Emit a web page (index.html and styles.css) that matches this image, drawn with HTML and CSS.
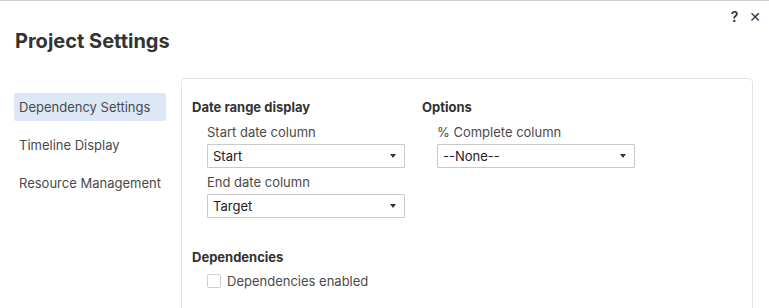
FILE: index.html
```html
<!DOCTYPE html>
<html lang="en">
<head>
  <meta charset="utf-8" />
  <title>Project Settings</title>
  <link rel="stylesheet" href="styles.css">
</head>
<body>
  <div class="dialog">
    <!-- Header -->
    <header class="dlg-head">
      <div class="tools">
        <span class="tool">?</span>
        <span class="tool close">&#x2715;</span>
      </div>
      <h1 class="title">Project Settings</h1>
    </header>

    <div class="dlg-body">
      <nav class="side">
        <a class="side-item active">Dependency Settings</a>
        <a class="side-item">Timeline Display</a>
        <a class="side-item">Resource Management</a>
      </nav>

      <section class="panel">
        <div class="cols">
          <div class="col">
            <h2>Date range display</h2>
            <div class="field">
              <label>Start date column</label>
              <div class="select"><span>Start</span><i class="caret"></i></div>
            </div>
            <div class="field">
              <label>End date column</label>
              <div class="select"><span>Target</span><i class="caret"></i></div>
            </div>
          </div>
          <div class="col">
            <h2>Options</h2>
            <div class="field">
              <label>% Complete column</label>
              <div class="select"><span>--None--</span><i class="caret"></i></div>
            </div>
          </div>
        </div>

        <h2 class="deps">Dependencies</h2>
        <label class="check"><span class="box"></span>Dependencies enabled</label>
      </section>
    </div>
  </div>
</body>
</html>
```

FILE: styles.css
```css
:root{
  --text:#333;
  --muted:#4a4a4a;
  --line:#e3e3e3;
  --field:#c9c9c9;
  --sel:#dce8f6;
}

*{box-sizing:border-box;margin:0;padding:0}
body{
  font-family:'Inter','Noto Sans',Arial,sans-serif;
  font-size:13px;color:var(--text);background:#fff;
}

.dialog{
  border-top:1px solid #cfcfcf;padding:0 16px 0 14px;
  height:308px;overflow:hidden;display:flex;flex-direction:column;
}

/* —— Header —— */
.tools{display:flex;justify-content:flex-end;align-items:center;gap:11px;height:28px;padding-top:4px;margin-right:-8px}
.tool{font-size:14px;font-weight:600;color:#333;line-height:20px}
.tool.close{font-size:14px;font-weight:700;font-family:'DejaVu Sans',sans-serif}
h1.title{font-size:20px;font-weight:700;line-height:24px;margin-left:1px;color:#333}

.dlg-body{display:flex;gap:15px;margin-top:25px;flex:1;min-height:0}

/* —— Sidebar —— */
.side{width:152px;flex:none;padding-top:15px;display:flex;flex-direction:column;gap:10px}
.side-item{display:block;height:28px;line-height:28px;padding-left:5px;color:var(--muted);font-size:13px;border-radius:2px}
.side-item.active{background:var(--sel)}

/* —— Panel —— */
.panel{flex:1;border:1px solid var(--line);border-bottom:none;border-radius:5px 5px 0 0;padding:19px 10px 0}
.cols{display:flex}
.col{width:230px}
h2{font-size:13px;font-weight:700;line-height:18px;color:#333}
.field{padding-left:15px;margin-top:7px}
.field + .field{margin-top:5px}
.field label{display:block;line-height:18px;color:var(--muted);margin-bottom:3px}
.select{
  width:198px;height:24px;border:1px solid var(--field);border-radius:1px;
  display:flex;align-items:center;justify-content:space-between;
  padding:0 8px 0 5px;color:#222;background:#fff;
}
.caret{width:0;height:0;border-left:3px solid transparent;border-right:3px solid transparent;border-top:4px solid #333}

h2.deps{margin-top:30px}
.check{display:flex;align-items:center;gap:6px;margin:6px 0 0 15px;line-height:18px;color:var(--muted)}
.box{width:14px;height:14px;border:1px solid #cfcfcf;border-radius:2px;background:#fff}
```
